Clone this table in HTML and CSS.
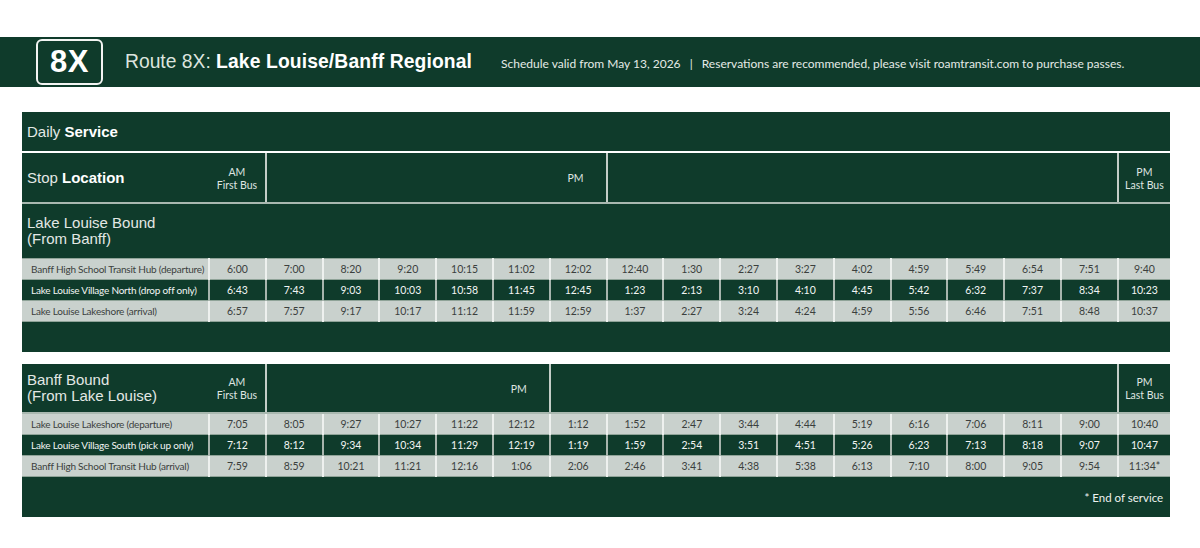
FILE: index.html
```html
<!DOCTYPE html>
<html lang="en">
<head>
<meta charset="utf-8">
<title>Route 8X: Lake Louise/Banff Regional</title>
<link rel="stylesheet" href="styles.css">
</head>
<body>
<header class="topbar">
  <div class="badge">8X</div>
  <h1 class="route-title"><span class="light">Route 8X:</span> <b>Lake Louise/Banff Regional</b></h1>
  <p class="notice">Schedule valid from May 13, 2026 <span class="sep">|</span> Reservations are recommended, please visit roamtransit.com to purchase passes.</p>
</header>

<main class="schedule">
  <table class="tt">
    <colgroup>
      <col class="c-stop">
      <col class="c-t"><col class="c-t"><col class="c-t"><col class="c-t"><col class="c-t"><col class="c-t"><col class="c-t"><col class="c-t"><col class="c-t"><col class="c-t"><col class="c-t"><col class="c-t"><col class="c-t"><col class="c-t"><col class="c-t"><col class="c-t"><col class="c-last">
    </colgroup>
    <tbody>
      <tr class="title-row"><td colspan="18"><span class="light">Daily</span> <b>Service</b></td></tr>
      <tr class="head-row">
        <td class="h-stop"><span class="light">Stop</span> <b>Location</b></td>
        <td class="h-sm h-div">AM<br>First Bus</td>
        <td class="h-sm h-pm h-div" colspan="6">PM</td>
        <td class="h-div" colspan="9"></td>
        <td class="h-sm">PM<br>Last Bus</td>
      </tr>
      <tr class="dir-row"><td colspan="18">Lake Louise Bound<br>(From Banff)</td></tr>
      <tr class="r-light">
        <td class="stop">Banff High School Transit Hub (departure)</td>
        <td>6:00</td><td>7:00</td><td>8:20</td><td>9:20</td><td>10:15</td><td>11:02</td><td>12:02</td><td>12:40</td><td>1:30</td><td>2:27</td><td>3:27</td><td>4:02</td><td>4:59</td><td>5:49</td><td>6:54</td><td>7:51</td><td>9:40</td>
      </tr>
      <tr class="r-dark">
        <td class="stop">Lake Louise Village North (drop off only)</td>
        <td>6:43</td><td>7:43</td><td>9:03</td><td>10:03</td><td>10:58</td><td>11:45</td><td>12:45</td><td>1:23</td><td>2:13</td><td>3:10</td><td>4:10</td><td>4:45</td><td>5:42</td><td>6:32</td><td>7:37</td><td>8:34</td><td>10:23</td>
      </tr>
      <tr class="r-light">
        <td class="stop">Lake Louise Lakeshore (arrival)</td>
        <td>6:57</td><td>7:57</td><td>9:17</td><td>10:17</td><td>11:12</td><td>11:59</td><td>12:59</td><td>1:37</td><td>2:27</td><td>3:24</td><td>4:24</td><td>4:59</td><td>5:56</td><td>6:46</td><td>7:51</td><td>8:48</td><td>10:37</td>
      </tr>
      <tr class="foot-row foot-a"><td colspan="18"></td></tr>
    </tbody>
  </table>

  <table class="tt tt-second">
    <colgroup>
      <col class="c-stop">
      <col class="c-t"><col class="c-t"><col class="c-t"><col class="c-t"><col class="c-t"><col class="c-t"><col class="c-t"><col class="c-t"><col class="c-t"><col class="c-t"><col class="c-t"><col class="c-t"><col class="c-t"><col class="c-t"><col class="c-t"><col class="c-t"><col class="c-last">
    </colgroup>
    <tbody>
      <tr class="head-row head-b">
        <td class="h-dir">Banff Bound<br>(From Lake Louise)</td>
        <td class="h-sm h-div">AM<br>First Bus</td>
        <td class="h-sm h-pm h-div" colspan="5">PM</td>
        <td class="h-div" colspan="10"></td>
        <td class="h-sm">PM<br>Last Bus</td>
      </tr>
      <tr class="r-light">
        <td class="stop">Lake Louise Lakeshore (departure)</td>
        <td>7:05</td><td>8:05</td><td>9:27</td><td>10:27</td><td>11:22</td><td>12:12</td><td>1:12</td><td>1:52</td><td>2:47</td><td>3:44</td><td>4:44</td><td>5:19</td><td>6:16</td><td>7:06</td><td>8:11</td><td>9:00</td><td>10:40</td>
      </tr>
      <tr class="r-dark">
        <td class="stop">Lake Louise Village South (pick up only)</td>
        <td>7:12</td><td>8:12</td><td>9:34</td><td>10:34</td><td>11:29</td><td>12:19</td><td>1:19</td><td>1:59</td><td>2:54</td><td>3:51</td><td>4:51</td><td>5:26</td><td>6:23</td><td>7:13</td><td>8:18</td><td>9:07</td><td>10:47</td>
      </tr>
      <tr class="r-light">
        <td class="stop">Banff High School Transit Hub (arrival)</td>
        <td>7:59</td><td>8:59</td><td>10:21</td><td>11:21</td><td>12:16</td><td>1:06</td><td>2:06</td><td>2:46</td><td>3:41</td><td>4:38</td><td>5:38</td><td>6:13</td><td>7:10</td><td>8:00</td><td>9:05</td><td>9:54</td><td>11:34*</td>
      </tr>
      <tr class="foot-row foot-b"><td colspan="18">* End of service</td></tr>
    </tbody>
  </table>
</main>
</body>
</html>
```

FILE: styles.css
```css
html, body {
  margin: 0;
  padding: 0;
  background: #ffffff;
}

body {
  font-family: "Liberation Sans", Arial, sans-serif;
  color: #ffffff;
}

.topbar {
  margin-top: 37px;
  height: 50px;
  background: #0f3b2b;
  display: flex;
  align-items: center;
  padding-left: 36px;
  box-sizing: border-box;
}

.badge {
  width: 67px;
  height: 46px;
  box-sizing: border-box;
  border: 2px solid #f2f4f2;
  border-radius: 6px;
  display: flex;
  align-items: center;
  justify-content: center;
  font-size: 31px;
  font-weight: bold;
  color: #ffffff;
  letter-spacing: 0.5px;
}

.route-title {
  margin: 0 0 0 22px;
  font-size: 19.3px;
  font-weight: normal;
  color: #ffffff;
  white-space: nowrap;
}

.route-title b {
  letter-spacing: 0.12px;
}

.route-title .light {
  color: #dde4df;
}

.notice {
  margin: 0 0 0 29px;
  font-family: "Lato", "Open Sans", sans-serif;
  font-size: 12px;
  color: #e4eae6;
  white-space: nowrap;
  padding-top: 2px;
}

.notice .sep {
  margin: 0 6px;
}

.schedule {
  margin: 25px 0 0 22px;
  width: 1148px;
}

.tt {
  width: 1148px;
  table-layout: fixed;
  border-collapse: collapse;
  background: #0f3b2b;
}

.tt-second {
  margin-top: 12px;
}

.c-stop { width: 187px; }
.c-t { width: 56.8px; }
.c-last { width: 52.2px; }

.tt td {
  padding: 0;
  overflow: hidden;
  white-space: nowrap;
}

.title-row td {
  height: 39px;
  font-size: 15px;
  padding-left: 5px;
  color: #ffffff;
  border-bottom: 2px solid #ffffff;
}

.light {
  color: #e3e8e5;
}

.head-row td {
  height: 47px;
  border-bottom: 2px solid #a9b8b0;
  vertical-align: middle;
}

.head-b td {
  height: 46px;
}

.h-stop {
  font-size: 15px;
  padding-left: 5px !important;
}

.h-dir {
  font-size: 15px;
  line-height: 16px;
  padding-left: 5px !important;
  color: #e3e8e5;
}

.h-sm {
  font-family: "Lato", "Open Sans", sans-serif;
  font-size: 10.5px;
  line-height: 13px;
  text-align: center;
  color: #dfe5e1;
  padding-top: 2px !important;
}

.h-pm {
  text-align: right;
  padding-right: 22px !important;
}

.h-div {
  border-right: 2px solid #c3cdc7;
}

.dir-row td {
  height: 54px;
  font-size: 15px;
  line-height: 16px;
  padding-left: 5px;
  color: #e3e8e5;
}

.r-light td,
.r-dark td {
  height: 20px;
  font-family: "Lato", "Open Sans", sans-serif;
  font-size: 10.5px;
  text-align: center;
  border-top: 1px solid #8fa398;
  border-left: 2px solid #eef1ef;
}

.r-light td {
  background: #c9d1cd;
  color: #3b3f3d;
}

.r-dark td {
  background: #0f3b2b;
  color: #f2f5f3;
  border-left-color: #a7b4ad;
}

.tt td.stop {
  text-align: left;
  padding-left: 9px;
  border-left: none;
  font-size: 10px;
  letter-spacing: -0.22px;
}

.foot-row td {
  border-top: 1px solid #8fa398;
}

.foot-a td {
  height: 30px;
}

.foot-b td {
  height: 40px;
  text-align: right;
  padding-right: 7px;
  font-family: "Lato", "Open Sans", sans-serif;
  font-size: 11.5px;
  color: #eef2ef;
}
```
